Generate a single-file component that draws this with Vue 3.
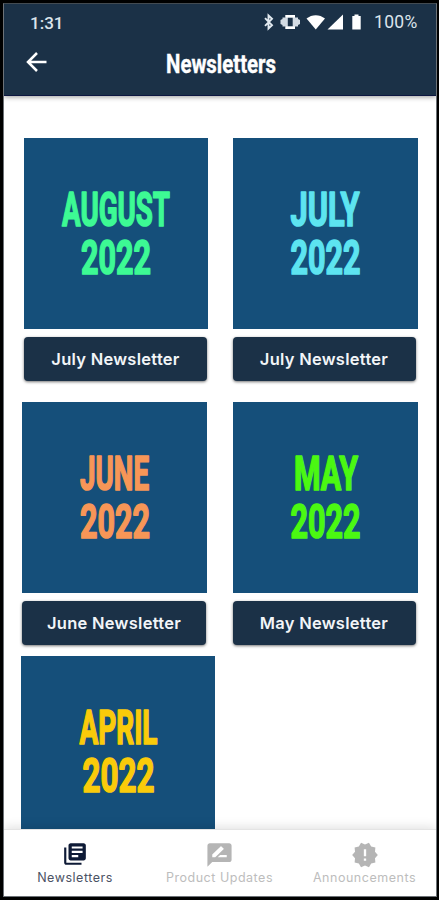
<script setup>
const columns = [
  [
    { month: 'AUGUST', label: 'July Newsletter', color: '#3dfa94', cls: 'august', w: 184, mx: 38, mw: 108, yx: 57, yw: 70 },
    { month: 'JUNE', label: 'June Newsletter', color: '#f79657', cls: 'june', w: 185, mx: 58, mw: 69, yx: 58, yw: 70 },
    { month: 'APRIL', label: '', color: '#facb0a', cls: 'april', w: 194, mx: 58.5, mw: 78, yx: 61.5, yw: 72 }
  ],
  [
    { month: 'JULY', label: 'July Newsletter', color: '#5de4f0', cls: 'july', w: 185, mx: 57.5, mw: 69, yx: 57.5, yw: 70 },
    { month: 'MAY', label: 'May Newsletter', color: '#4bf812', cls: 'may', w: 185, mx: 61, mw: 64, yx: 57.5, yw: 70 }
  ]
]
</script>

<template>
  <div class="device">
    <div class="screen">
      <header class="top">
        <div class="status">
          <span class="time">1:31</span>
          <svg class="sys" width="102" height="20" viewBox="0 0 102 20">
            <path d="M3 6.200l7 7-3.500 3.300V3.500L10 6.800l-7 7" fill="none" stroke="#e3eaf0" stroke-width="1.900" />
            <g fill="#d3dbe3">
              <path d="M18.500 8l2-1V5.500h3V3h9.500v2.500h3V7l2 1v4l-2 1v1.500h-3V17h-9.500v-2.500h-3V13l-2-1zM25.800 5.500v9h4.900v-9z" fill-rule="evenodd" />
              <path d="M23.500 3H33v2.500h-9.500zM23.500 14.500H33V17h-9.500z" fill="#fff" />
            </g>
            <path d="M44.500 6.500C50 2 57.500 2 63 6.500L53.750 17.500z" fill="#fff" />
            <path d="M81 2.500v15H65.500z" fill="#fff" />
            <path d="M92.500 2.500h4v1.600h2.200v13.400h-8.400V4.100h2.200z" fill="#fff" />
          </svg>
          <span class="battery">100%</span>
        </div>
        <div class="bar">
          <svg class="back" width="22" height="22" viewBox="0 0 22 22">
            <path d="M20.500 11H2.500M11 2L2 11l9 9" fill="none" stroke="#fff" stroke-width="2.500" />
          </svg>
          <svg class="title" width="118" height="36" viewBox="0 0 118 36">
            <text x="4" y="27" textLength="110" lengthAdjust="spacingAndGlyphs">Newsletters</text>
          </svg>
        </div>
      </header>

      <main class="content">
        <div v-for="(col, i) in columns" :key="i" class="column">
          <article v-for="item in col" :key="item.month" class="issue" :class="item.cls">
            <svg class="cover" :width="item.w" height="191" :viewBox="`0 0 ${item.w} 191`">
              <g :fill="item.color" :stroke="item.color">
                <text :x="item.mx" y="87.500" :textLength="item.mw" lengthAdjust="spacingAndGlyphs">{{ item.month }}</text>
                <text :x="item.yx" y="135.500" :textLength="item.yw" lengthAdjust="spacingAndGlyphs">2022</text>
              </g>
            </svg>
            <button v-if="item.label" class="open">{{ item.label }}</button>
          </article>
        </div>
      </main>

      <nav class="tabs">
        <a class="tab active">
          <svg width="26" height="26" viewBox="0 0 24 24">
            <path fill="currentColor" d="M4 6H2v14c0 1.100.9 2 2 2h14v-2H4V6zm16-4H8c-1.100 0-2 .9-2 2v12c0 1.100.9 2 2 2h12c1.100 0 2-.9 2-2V4c0-1.100-.9-2-2-2zm-1 9H9V9h10v2zm-4 4H9v-2h6v2zm4-8H9V5h10v2z" />
          </svg>
          <span>Newsletters</span>
        </a>
        <a class="tab">
          <svg width="29" height="28" viewBox="0 0 24 24" preserveAspectRatio="none">
            <path fill="currentColor" d="M20 2H4c-1.100 0-1.990.9-1.990 2L2 22l4-4h14c1.100 0 2-.9 2-2V4c0-1.100-.9-2-2-2zM6 14v-2.470l6.880-6.880c.2-.2.510-.2.710 0l1.770 1.770c.2.2.2.510 0 .710L8.470 14H6zm12 0h-7.500l2-2H18v2z" />
          </svg>
          <span>Product Updates</span>
        </a>
        <a class="tab">
          <svg class="seal" width="28" height="28" viewBox="0 0 24 24">
            <path fill="currentColor" d="M23 12l-2.440-2.780.34-3.680-3.610-.82-1.890-3.180L12 3 8.600 1.540 6.710 4.720l-3.610.81.34 3.680L1 12l2.440 2.780-.34 3.690 3.610.82 1.890 3.180L12 21l3.400 1.460 1.890-3.180 3.610-.82-.34-3.680L23 12zm-10 5h-2v-2h2v2zm0-4h-2V7h2v6z" />
          </svg>
          <span>Announcements</span>
        </a>
      </nav>
    </div>
  </div>
</template>

<style>
body { background: #000; }
</style>

<style scoped>
* { box-sizing: border-box; }
.device {
  width: 439px;
  height: 900px;
  padding: 3px 2px 3px 3px;
  background: #000;
  overflow: hidden;
}
.screen {
  height: 894px;
  display: flex;
  flex-direction: column;
  background: #fff;
  border: 1px solid #6d7277;
  border-top-color: #434b52;
  overflow: hidden;
  font-family: Inter, "Liberation Sans", sans-serif;
}
.top {
  flex: none;
  height: 92px;
  background: #1b3147;
  border-bottom: 1px solid #0d1741;
  box-shadow: 0 1px 5px rgba(0, 0, 0, .4);
  z-index: 1;
}
.status {
  height: 36px;
  display: flex;
  align-items: center;
  padding-left: 26px;
  color: #dce4ec;
  font-family: Roboto, sans-serif;
}
.time { width: 232px; font-weight: 500; font-size: 17px; margin-top: 2px; }
.sys { flex: none; }
.battery { margin-left: 10px; margin-top: -1px; font-size: 17.5px; letter-spacing: .3px; }
.bar {
  height: 44px;
  display: flex;
  align-items: center;
  padding-left: 22px;
}
.title { margin-left: 113.5px; margin-top: 3px; }
.title text {
  font: 700 25.5px Roboto, sans-serif;
  fill: #fff;
  stroke: #fff;
  stroke-width: .4px;
}
.content {
  flex: 1;
  min-height: 0;
  overflow: hidden;
  display: flex;
  align-items: flex-start;
  padding: 42px 0 0 17px;
}
.column { width: 211.5px; flex: none; }
.issue { display: flex; flex-direction: column; align-items: flex-start; }
.august { padding-left: 3px; margin-bottom: 21px; }
.june { padding-left: 1px; margin-bottom: 11px; }
.july { margin-bottom: 21px; }
.cover { display: block; background: #154f7a; }
.cover text {
  font: 700 48px Roboto, sans-serif;
  stroke-width: 1.7px;
  stroke-linejoin: round;
}
.open {
  width: 183px;
  height: 44px;
  margin-top: 8px;
  padding: 0 0 1px;
  border: 0;
  border-radius: 4px;
  background: #1b3147;
  color: #f2f5f8;
  font: 600 16.5px Inter, sans-serif;
  letter-spacing: .27px;
  box-shadow: 0 1px 3px rgba(0, 0, 0, .55);
}
.june .open { width: 184px; }
.tabs {
  flex: none;
  height: 67px;
  display: grid;
  grid-template-columns: 142px 147px 1fr;
  background: #fff;
  border-top: 1px solid #e4e4e4;
  box-shadow: 0 -2px 10px rgba(0, 0, 0, .12);
  z-index: 1;
}
.tab {
  display: flex;
  flex-direction: column;
  align-items: center;
  padding-top: 11px;
  color: #b5b5b5;
  font-size: 12.5px;
  letter-spacing: .52px;
  white-space: nowrap;
}
.tab svg { flex: none; margin-bottom: -2px; }
.tab svg:not([height="26"]) { margin-bottom: -4px; }
.tab span { line-height: 20px; margin-top: 3px; color: #bdbdbd; }
.active { color: #0e1a36; }
.tab.active span { color: #4b5264; }
</style>
